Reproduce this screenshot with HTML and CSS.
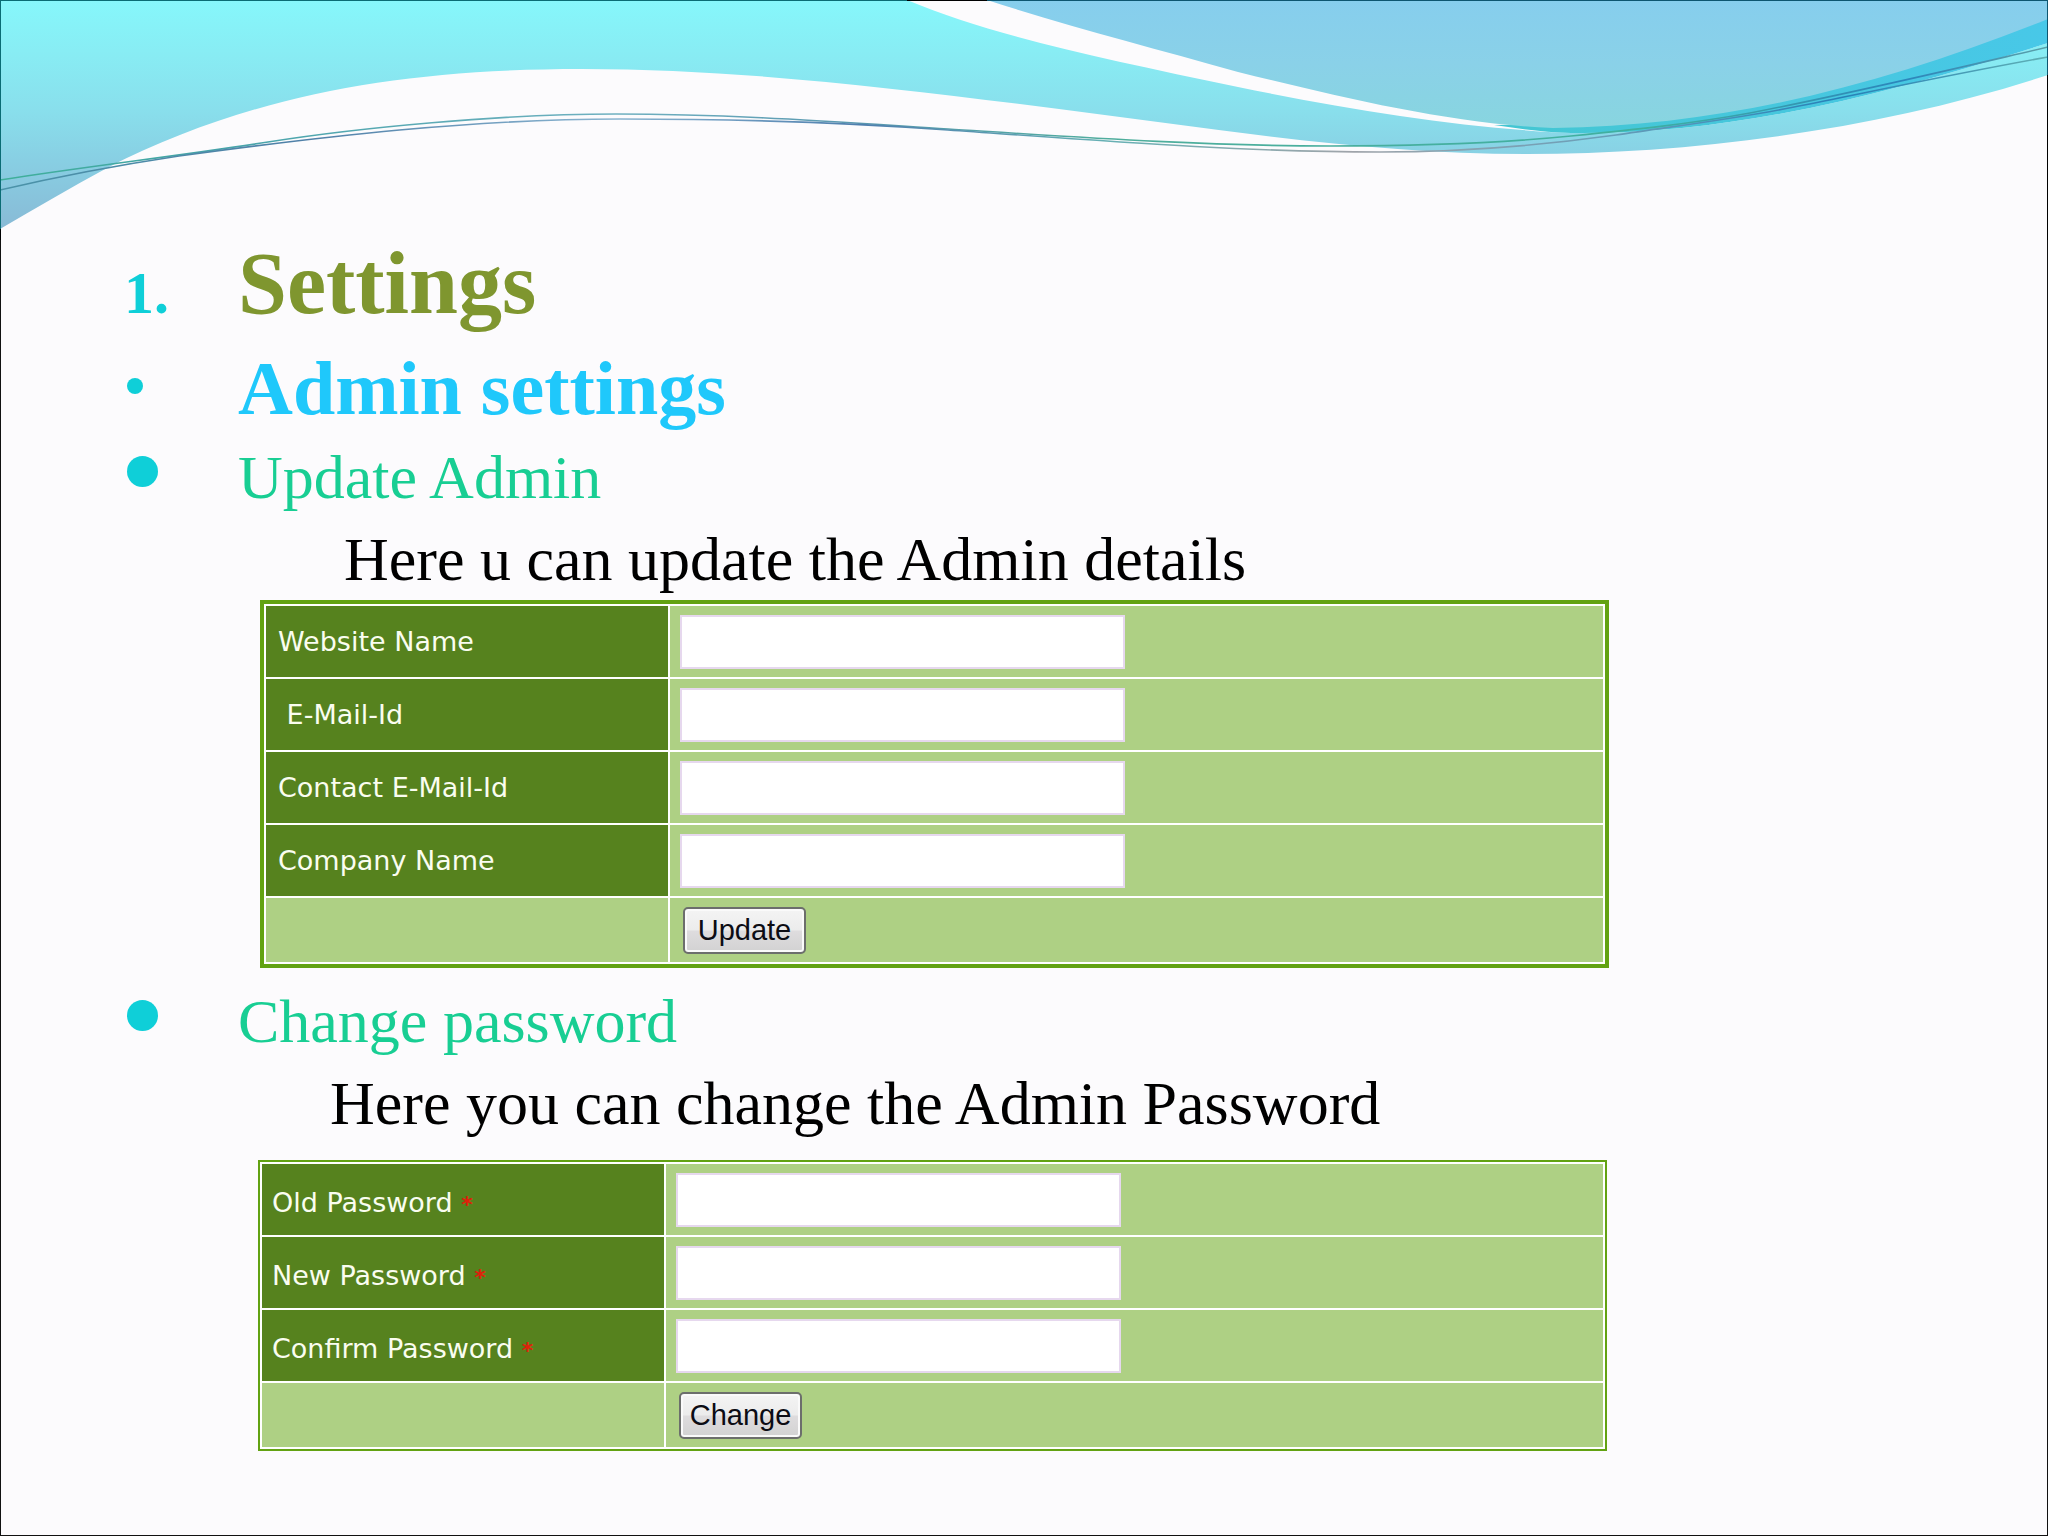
FILE: index.html
```html
<!DOCTYPE html>
<html lang="en">
<head>
<meta charset="utf-8">
<meta name="viewport" content="width=device-width, initial-scale=1">
<title>Settings</title>
<link rel="stylesheet" href="styles.css">
</head>
<body>
<div class="slide">
  <header class="waves">
    <svg class="waves-art" viewBox="0 0 2048 240" aria-hidden="true">
      <defs>
        <linearGradient id="aqua" gradientUnits="userSpaceOnUse" x1="0" y1="0" x2="0" y2="229">
          <stop offset="0" stop-color="#86f7fb"/>
          <stop offset=".22" stop-color="#88edf4"/>
          <stop offset=".48" stop-color="#89dfec"/>
          <stop offset=".7" stop-color="#88cfe3"/>
          <stop offset="1" stop-color="#88bad6"/>
        </linearGradient>
        <linearGradient id="sky" gradientUnits="userSpaceOnUse" x1="0" y1="0" x2="0" y2="128">
          <stop offset="0" stop-color="#86ceed"/>
          <stop offset=".5" stop-color="#8ad1e8"/>
          <stop offset="1" stop-color="#88d5df"/>
        </linearGradient>
        <linearGradient id="band" gradientUnits="userSpaceOnUse" x1="1491" y1="0" x2="2048" y2="0">
          <stop offset="0" stop-color="#44c6d2"/>
          <stop offset="1" stop-color="#48c8e8"/>
        </linearGradient>
        <linearGradient id="thread" gradientUnits="userSpaceOnUse" x1="0" y1="0" x2="2048" y2="0">
          <stop offset="0" stop-color="#3fb09a"/>
          <stop offset=".1" stop-color="#45a3a8"/>
          <stop offset=".3" stop-color="#6fb0c0"/>
          <stop offset=".42" stop-color="#5a98b0"/>
          <stop offset=".55" stop-color="#4fae9c"/>
          <stop offset=".8" stop-color="#3fb0a0"/>
          <stop offset=".93" stop-color="#2c86bc"/>
          <stop offset="1" stop-color="#5aa0a8"/>
        </linearGradient>
        <linearGradient id="thread-low" gradientUnits="userSpaceOnUse" x1="0" y1="0" x2="2048" y2="0">
          <stop offset="0" stop-color="#4a93a8"/>
          <stop offset=".15" stop-color="#5080a8"/>
          <stop offset=".3" stop-color="#8ab4d0"/>
          <stop offset=".42" stop-color="#4f7fae"/>
          <stop offset=".54" stop-color="#66b0b4"/>
          <stop offset=".66" stop-color="#a0a4aa"/>
          <stop offset=".78" stop-color="#6a9fb8"/>
          <stop offset=".9" stop-color="#2680b8"/>
          <stop offset="1" stop-color="#5fb0b4"/>
        </linearGradient>
      </defs>
      <path fill="url(#aqua)" d="M0 0H907C990 35 1100 58 1238 87C1350 110 1470 129 1571 133C1735 135 1890 93 2048 43V75C1880 130 1690 154 1527 154C1370 154 1215 129 1059 109C900 89 741 69 582 69C400 69 250 95 107 168C72 187 36 208 0 229z"/>
      <path fill="url(#band)" d="M1494 125C1520 129 1545 132 1571 133C1735 135 1890 93 2048 43V10L1700 90L1560 124z"/>
      <path fill="url(#sky)" d="M987 0C1070 27 1150 47 1238 72C1340 97 1450 124 1553 128C1730 126 1890 82 2048 19V0z"/>
      <path fill="none" stroke="url(#thread)" stroke-width="1.6" d="M0 180C89 166 179 156 268 142S500 114 616 114S837 122 948 129C1075 137 1203 146 1330 146C1410 146 1491 144 1571 136C1631 130 1690 124 1750 113C1849 94 1949 70 2048 47"/>
      <path fill="none" stroke="url(#thread-low)" stroke-width="1.6" d="M0 190C60 176 119 165 179 156C326 136 473 119 620 119C729 119 839 122 948 130C1092 140 1236 152 1380 152C1459 152 1537 146 1616 135C1675 126 1735 119 1794 107C1879 90 1963 72 2048 57"/>
      <path fill="#0a6c74" d="M0 0H907V1H1V229H0z"/>
      <path fill="#000" d="M907 0H987V1H907zM0 229H1V240H0zM2047 75H2048V240H2047z"/>
      <path fill="#0d5670" d="M987 0H2048V75H2047V1H987z"/>
    </svg>
  </header>

  <main class="content">
    <h1 class="item item-title"><span class="number">1.</span><span>Settings</span></h1>
    <h2 class="item item-subtitle"><span class="dot"></span><span>Admin settings</span></h2>

    <section>
      <h3 class="item item-topic"><span class="dot dot-large"></span><span>Update Admin</span></h3>
      <p class="note note-admin">Here u can update the Admin details</p>
      <form class="panel panel-admin">
        <table class="grid">
          <tr>
            <th scope="row"><label for="website">Website Name</label></th>
            <td><input type="text" id="website"></td>
          </tr>
          <tr>
            <th scope="row"><label for="email">&nbsp;E-Mail-Id</label></th>
            <td><input type="text" id="email"></td>
          </tr>
          <tr>
            <th scope="row"><label for="contact">Contact E-Mail-Id</label></th>
            <td><input type="text" id="contact"></td>
          </tr>
          <tr>
            <th scope="row"><label for="company">Company Name</label></th>
            <td><input type="text" id="company"></td>
          </tr>
          <tr class="actions">
            <td></td>
            <td><button type="button">Update</button></td>
          </tr>
        </table>
      </form>
    </section>

    <section>
      <h3 class="item item-topic item-next"><span class="dot dot-large"></span><span>Change password</span></h3>
      <p class="note note-password">Here you can change the Admin Password</p>
      <form class="panel panel-password">
        <table class="grid">
          <tr>
            <th scope="row"><label for="old">Old Password <span class="required">*</span></label></th>
            <td><input type="password" id="old"></td>
          </tr>
          <tr>
            <th scope="row"><label for="new">New Password <span class="required">*</span></label></th>
            <td><input type="password" id="new"></td>
          </tr>
          <tr>
            <th scope="row"><label for="confirm">Confirm Password <span class="required">*</span></label></th>
            <td><input type="password" id="confirm"></td>
          </tr>
          <tr class="actions">
            <td></td>
            <td><button type="button">Change</button></td>
          </tr>
        </table>
      </form>
    </section>
  </main>
</div>
</body>
</html>
```
FILE: styles.css
```css
* {
  box-sizing: border-box;
}

body {
  margin: 0;
  background: #fcfbfd;
  color: #000;
  font-family: Constantia, "Liberation Serif", serif;
}

.slide {
  min-height: 100vh;
  border: 1px solid #111;
  border-top: 0;
}

.waves {
  margin: 0 -1px;
}

.waves-art {
  display: block;
  width: 100%;
  height: auto;
}

.content {
  padding: 0 40px 40px 123px;
}

.item {
  display: grid;
  grid-template-columns: 114px 1fr;
  align-items: center;
  margin: 0;
}

.item-title {
  align-items: baseline;
  color: #7f962f;
  font-size: 88px;
  line-height: 88px;
}

.number {
  color: #0fcfd8;
  font-size: 60px;
  line-height: 60px;
}

.item-subtitle {
  margin-top: 16px;
  color: #1fc8fb;
  font-size: 76px;
  line-height: 88px;
}

.item-topic {
  margin-top: 8px;
  color: #18ce93;
  font-size: 62px;
  font-weight: 400;
  line-height: 74px;
}

.item-next {
  margin-top: 16px;
}

.dot {
  width: 16px;
  height: 16px;
  margin: 0 0 4px 3px;
  border-radius: 50%;
  background: #0fcfd8;
}

.dot-large {
  width: 31px;
  height: 31px;
  margin-bottom: 12px;
}

.note {
  margin: 8px 0 0;
  font-size: 62px;
  line-height: 74px;
}

.note-admin {
  padding-left: 220px;
}

.note-password {
  padding-left: 206px;
}

.panel {
  max-width: 1349px;
  background: #fff;
}

.panel-admin {
  margin: 4px 0 0 136px;
  border: 4px solid #62a212;
}

.panel-password {
  margin: 20px 0 0 134px;
  border: 2px solid #62a212;
}

.grid {
  width: 100%;
  border-spacing: 2px;
  table-layout: fixed;
}

.grid th,
.grid td {
  height: 71px;
  padding: 0 10px;
  background: #aed084;
  text-align: left;
  vertical-align: middle;
}

.grid th,
.grid td:first-child {
  width: 402px;
}

.grid th {
  padding: 0 12px;
  background: #56821e;
  color: #fafdf0;
  font-family: Verdana, "DejaVu Sans", sans-serif;
  font-size: 27px;
  font-weight: 400;
}

.panel-password th {
  padding: 6px 10px 0;
}

.grid .actions td {
  height: 64px;
}

.required {
  color: #e0200a;
  font-size: 22px;
  font-weight: 700;
}

.grid input {
  display: block;
  width: 445px;
  max-width: 100%;
  height: 54px;
  padding: 4px 8px;
  border: 2px solid #e6d8ee;
  background: #fff;
  font-size: 27px;
}

.grid button {
  display: block;
  width: 123px;
  height: 47px;
  margin-left: 3px;
  padding: 0;
  border: 2px solid #6c6e6c;
  border-radius: 5px;
  background: linear-gradient(#f4f4f4 0%, #ececec 48%, #dedcde 52%, #d2d2d2 100%);
  box-shadow: inset 0 0 0 2px #fafafa;
  color: #0c0c14;
  font-family: Arial, "Liberation Sans", sans-serif;
  font-size: 29px;
}
```
